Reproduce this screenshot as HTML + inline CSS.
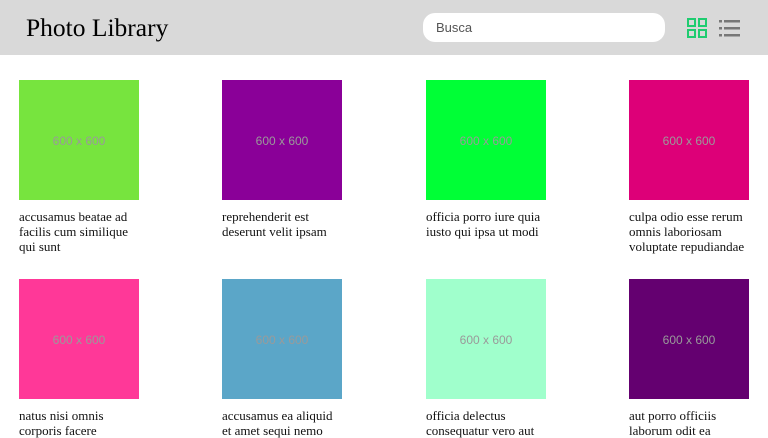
<!DOCTYPE html>
<html><head><style>
body{margin:0;width:768px;height:432px;overflow:hidden;background:#fff;font-family:"Liberation Serif",serif}
.hd{position:absolute;left:0;top:0;width:768px;height:55px;background:#d9d9d9}
.t{position:absolute;left:26px;top:13px;font-size:25.5px;color:#000}
.s{position:absolute;left:423px;top:13px;width:242px;height:29px;background:#fff;border-radius:12px;font-family:"Liberation Sans",sans-serif;font-size:13px;color:#555;line-height:29px;box-sizing:border-box;padding-left:13px}
.c{position:absolute;width:122px}
.im{width:120px;height:120px;display:flex;align-items:center;justify-content:center;font-family:"Liberation Sans",sans-serif;font-size:12px;color:#9a9a9a;padding-top:2px;box-sizing:border-box}
.tx{margin-top:9px;font-size:13px;line-height:15px;color:#111}
</style></head><body>
<div class="hd"><div class="t">Photo Library</div><div class="s">Busca</div>
<svg style="position:absolute;left:687px;top:18px" width="21" height="20"><g fill="none" stroke="#1fcc70" stroke-width="2"><rect x="1" y="1" width="7" height="7"/><rect x="12" y="1" width="7" height="7"/><rect x="1" y="12" width="7" height="7"/><rect x="12" y="12" width="7" height="7"/></g></svg>
<svg style="position:absolute;left:719px;top:18px" width="22" height="20"><g fill="#777"><rect x="0" y="2" width="3" height="2.5"/><rect x="5" y="2" width="16" height="2.5"/><rect x="0" y="9" width="3" height="2.5"/><rect x="5" y="9" width="16" height="2.5"/><rect x="0" y="16" width="3" height="2.5"/><rect x="5" y="16" width="16" height="2.5"/></g></svg>
</div>
<div class="c" style="left:19px;top:80px"><div class="im" style="background:#77e43e">600 x 600</div><div class="tx">accusamus beatae ad facilis cum similique qui sunt</div></div>
<div class="c" style="left:222px;top:80px"><div class="im" style="background:#8a0098">600 x 600</div><div class="tx">reprehenderit est deserunt velit ipsam</div></div>
<div class="c" style="left:426px;top:80px"><div class="im" style="background:#00ff36">600 x 600</div><div class="tx">officia porro iure quia iusto qui ipsa ut modi</div></div>
<div class="c" style="left:629px;top:80px"><div class="im" style="background:#dd0078">600 x 600</div><div class="tx">culpa odio esse rerum omnis laboriosam voluptate repudiandae</div></div>
<div class="c" style="left:19px;top:279px"><div class="im" style="background:#ff3898">600 x 600</div><div class="tx">natus nisi omnis corporis facere</div></div>
<div class="c" style="left:222px;top:279px"><div class="im" style="background:#5ba6c8">600 x 600</div><div class="tx">accusamus ea aliquid et amet sequi nemo</div></div>
<div class="c" style="left:426px;top:279px"><div class="im" style="background:#a0ffcc">600 x 600</div><div class="tx">officia delectus consequatur vero aut</div></div>
<div class="c" style="left:629px;top:279px"><div class="im" style="background:#640070">600 x 600</div><div class="tx">aut porro officiis laborum odit ea</div></div>
</body></html>
